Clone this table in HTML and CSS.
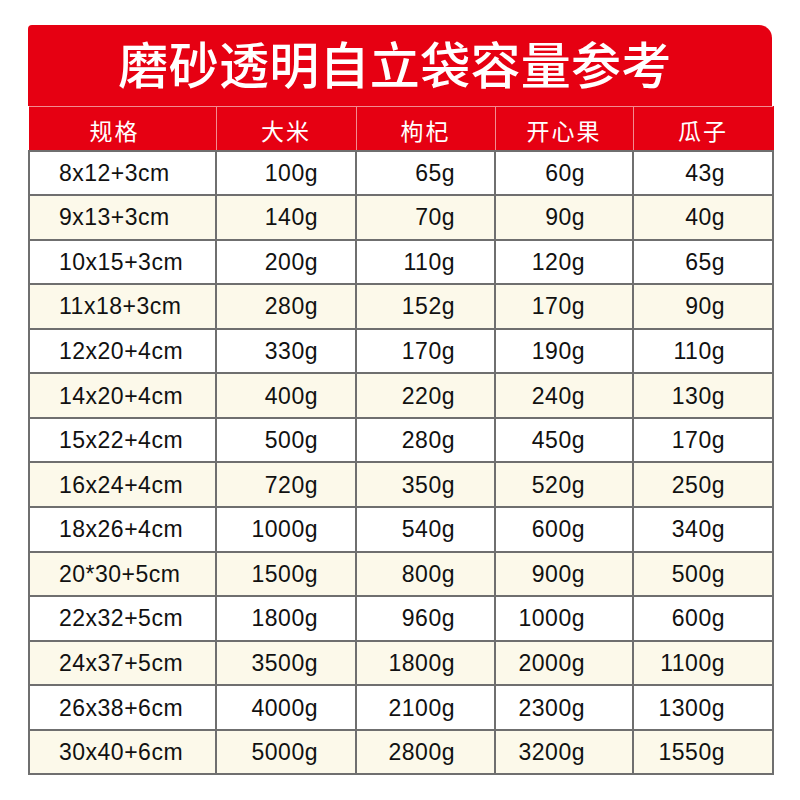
FILE: index.html
```html
<!DOCTYPE html>
<html lang="zh">
<head>
<meta charset="utf-8">
<link rel="stylesheet" href="styles.css">
</head>
<body>
<div class="card">
  <div class="title">磨砂透明自立袋容量参考</div>
  <table class="grid">
    <colgroup>
      <col class="c1"><col class="c2"><col class="c3"><col class="c4"><col class="c5">
    </colgroup>
    <thead>
      <tr><th>规格</th><th>大米</th><th>枸杞</th><th>开心果</th><th>瓜子</th></tr>
    </thead>
    <tbody>
      <tr><td>8x12+3cm</td><td>100g</td><td>65g</td><td>60g</td><td>43g</td></tr>
      <tr><td>9x13+3cm</td><td>140g</td><td>70g</td><td>90g</td><td>40g</td></tr>
      <tr><td>10x15+3cm</td><td>200g</td><td>110g</td><td>120g</td><td>65g</td></tr>
      <tr><td>11x18+3cm</td><td>280g</td><td>152g</td><td>170g</td><td>90g</td></tr>
      <tr><td>12x20+4cm</td><td>330g</td><td>170g</td><td>190g</td><td>110g</td></tr>
      <tr><td>14x20+4cm</td><td>400g</td><td>220g</td><td>240g</td><td>130g</td></tr>
      <tr><td>15x22+4cm</td><td>500g</td><td>280g</td><td>450g</td><td>170g</td></tr>
      <tr><td>16x24+4cm</td><td>720g</td><td>350g</td><td>520g</td><td>250g</td></tr>
      <tr><td>18x26+4cm</td><td>1000g</td><td>540g</td><td>600g</td><td>340g</td></tr>
      <tr><td>20*30+5cm</td><td>1500g</td><td>800g</td><td>900g</td><td>500g</td></tr>
      <tr><td>22x32+5cm</td><td>1800g</td><td>960g</td><td>1000g</td><td>600g</td></tr>
      <tr><td>24x37+5cm</td><td>3500g</td><td>1800g</td><td>2000g</td><td>1100g</td></tr>
      <tr><td>26x38+6cm</td><td>4000g</td><td>2100g</td><td>2300g</td><td>1300g</td></tr>
      <tr><td>30x40+6cm</td><td>5000g</td><td>2800g</td><td>3200g</td><td>1550g</td></tr>
    </tbody>
  </table>
</div>
</body>
</html>
```
FILE: styles.css
```css
html, body {
  margin: 0;
  padding: 0;
  background: #ffffff;
}
body {
  width: 800px;
  height: 800px;
  overflow: hidden;
}
.card {
  margin: 25px 0 0 28px;
  width: 744px;
}
.title {
  height: 81px;
  background: #e60012;
  border-radius: 4px 13px 0 0;
  color: #ffffff;
  font-family: "Noto Sans CJK SC", sans-serif;
  font-weight: 500;
  font-size: 50px;
  line-height: 74px;
  text-align: center;
  padding-right: 10px;
  letter-spacing: 0.3px;
  box-sizing: border-box;
}
.grid {
  width: 744px;
  border-collapse: collapse;
  table-layout: fixed;
}
.c1 { width: 187px; }
.c2 { width: 140px; }
.c3 { width: 139px; }
.c4 { width: 138px; }
.c5 { width: 140px; }
.grid th {
  height: 44px;
  padding: 0;
  background: #e60012;
  color: #ffffff;
  font-family: "Noto Sans CJK SC", sans-serif;
  font-weight: 400;
  font-size: 23px;
  letter-spacing: 2px;
  text-align: center;
  border: 1.5px solid #f28b90;
  border-bottom: none;
  padding-top: 3px;
  box-sizing: border-box;
}
.grid thead th:first-child { border-left-color: #e60012; padding-right: 16px; }
.grid thead th:last-child { border-right-color: #e60012; }
.grid td {
  height: 44.57px;
  padding: 0;
  box-sizing: border-box;
  border: 2px solid #6f6f6f;
  font-family: "Liberation Sans", Arial, sans-serif;
  font-size: 23px;
  letter-spacing: 0.5px;
  color: #111111;
  text-align: right;
  padding-top: 1px;
}
.grid tbody tr:nth-child(even) td { background: #fcf9ea; }
.grid td:nth-child(1) { text-align: left; padding-left: 29px; }
.grid td:nth-child(2) { padding-right: 37px; }
.grid td:nth-child(3) { padding-right: 39px; }
.grid td:nth-child(4) { padding-right: 47px; }
.grid td:nth-child(5) { padding-right: 47px; }
```
